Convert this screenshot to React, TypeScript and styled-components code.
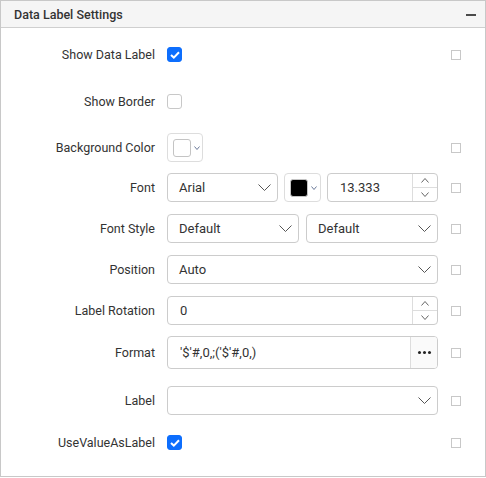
import React from "react";
import styled, { createGlobalStyle } from "styled-components";

const GlobalStyle = createGlobalStyle`
  html, body {
    margin: 0;
    padding: 0;
    background: #ffffff;
  }
  body {
    font-family: "Roboto", "Liberation Sans", sans-serif;
  }
  * {
    box-sizing: border-box;
  }
`;

function Chevron({ w = 12, h = 7, down = true, color = "#555" }: { w?: number; h?: number; down?: boolean; color?: string }) {
  return (
    <svg width={w} height={h} viewBox={`0 0 ${w} ${h}`} fill="none">
      <polyline
        points={down ? `0.5,0.5 ${w / 2},${h - 0.5} ${w - 0.5},0.5` : `0.5,${h - 0.5} ${w / 2},0.5 ${w - 0.5},${h - 0.5}`}
        stroke={color}
        strokeWidth="1"
      />
    </svg>
  );
}

function CheckBox({ checked }: { checked?: boolean }) {
  return (
    <Check $checked={checked}>
      {checked && (
        <svg width="10" height="8" viewBox="0 0 10 8" fill="none">
          <polyline points="1,4 3.8,6.6 9,1.2" stroke="#fff" strokeWidth="2" />
        </svg>
      )}
    </Check>
  );
}

function Dropdown({ value, width }: { value?: string; width?: number }) {
  return (
    <Select $width={width}>
      <span>{value}</span>
      <Chevron w={13} h={7} />
    </Select>
  );
}

function ColorPicker({ color, width }: { color: string; width: number }) {
  return (
    <ColorBox $width={width}>
      <Swatch $color={color} />
      <Chevron w={6} h={4} color="#6b7a99" />
    </ColorBox>
  );
}

function NumericBox({ value, width }: { value: string; width?: number }) {
  return (
    <Numeric $width={width}>
      <InputText>{value}</InputText>
      <Spinner>
        <SpinHalf>
          <Chevron w={8} h={5} down={false} color="#666" />
        </SpinHalf>
        <SpinHalf>
          <Chevron w={8} h={5} color="#666" />
        </SpinHalf>
      </Spinner>
    </Numeric>
  );
}

function Row({
  label,
  mt,
  side = true,
  children,
}: {
  label: string;
  mt: number;
  side?: boolean;
  children: React.ReactNode;
}) {
  return (
    <RowWrap $mt={mt}>
      <Label>{label}</Label>
      <Controls>{children}</Controls>
      {side && <SideBox />}
    </RowWrap>
  );
}

export default function App() {
  return (
    <>
      <GlobalStyle />
      <Panel>
        <Header>
          <Title>Data Label Settings</Title>
          <Minus />
        </Header>
        <Body>
          <Row label="Show Data Label" mt={12}>
            <CheckBox checked />
          </Row>
          <Row label="Show Border" mt={18} side={false}>
            <CheckBox />
          </Row>
          <Row label="Background Color" mt={17}>
            <ColorPicker color="#ffffff" width={36} />
          </Row>
          <Row label="Font" mt={11}>
            <Dropdown value="Arial" width={111} />
            <ColorPicker color="#000000" width={37} />
            <NumericBox value="13.333" width={111} />
          </Row>
          <Row label="Font Style" mt={12}>
            <Dropdown value="Default" width={132} />
            <Dropdown value="Default" width={132} />
          </Row>
          <Row label="Position" mt={12}>
            <Dropdown value="Auto" />
          </Row>
          <Row label="Label Rotation" mt={12}>
            <NumericBox value="0" />
          </Row>
          <Row label="Format" mt={11}>
            <FormatBox>
              <InputText>'$'#,0,;('$'#,0,)</InputText>
              <DotsButton>
                <Dot />
                <Dot />
                <Dot />
              </DotsButton>
            </FormatBox>
          </Row>
          <Row label="Label" mt={17}>
            <Dropdown value="" />
          </Row>
          <Row label="UseValueAsLabel" mt={13}>
            <CheckBox checked />
          </Row>
        </Body>
      </Panel>
    </>
  );
}

const Panel = styled.div`
  width: 486px;
  height: 477px;
  border: 1px solid #c8c8c8;
  background: #ffffff;
  display: flex;
  flex-direction: column;
`;

const Header = styled.div`
  height: 27px;
  background: #f5f5f5;
  border-bottom: 1px solid #cfcfcf;
  display: flex;
  align-items: center;
  justify-content: space-between;
  padding: 0 9px 0 13px;
`;

const Title = styled.div`
  font-size: 12.5px;
  font-weight: 500;
  color: #333333;
`;

const Minus = styled.div`
  width: 10px;
  height: 2px;
  background: #4a4a4a;
  margin-top: 1px;
`;

const Body = styled.div`
  display: flex;
  flex-direction: column;
`;

const RowWrap = styled.div<{ $mt: number }>`
  display: flex;
  align-items: center;
  min-height: 29px;
  margin-top: ${(p) => p.$mt}px;
`;

const Label = styled.div`
  width: 154px;
  text-align: right;
  font-size: 12.5px;
  color: #333333;
  margin-right: 12px;
`;

const Controls = styled.div`
  width: 271px;
  display: flex;
  align-items: center;
  justify-content: space-between;
`;

const SideBox = styled.div`
  width: 10px;
  height: 10px;
  border: 1px solid #c8c8c8;
  margin-left: 13px;
`;

const Check = styled.div<{ $checked?: boolean }>`
  width: 15px;
  height: 15px;
  border-radius: 3px;
  border: 1px solid ${(p) => (p.$checked ? "#0d6efd" : "#c8c8c8")};
  background: ${(p) => (p.$checked ? "#0d6efd" : "#ffffff")};
  display: flex;
  align-items: center;
  justify-content: center;
`;

const Select = styled.div<{ $width?: number }>`
  width: ${(p) => (p.$width ? `${p.$width}px` : "100%")};
  height: 29px;
  border: 1px solid #cccccc;
  border-radius: 4px;
  display: flex;
  align-items: center;
  justify-content: space-between;
  padding: 0 6px 0 11px;
  font-size: 13px;
  color: #333333;
`;

const ColorBox = styled.div<{ $width: number }>`
  width: ${(p) => p.$width}px;
  height: 29px;
  border: 1px solid #dddddd;
  border-radius: 4px;
  display: flex;
  align-items: center;
  padding: 0 0 0 5px;
  gap: 3px;
`;

const Swatch = styled.div<{ $color: string }>`
  width: 18px;
  height: 18px;
  border-radius: 3px;
  border: 1px solid #c4c4c4;
  background: ${(p) => p.$color};
`;

const Numeric = styled.div<{ $width?: number }>`
  width: ${(p) => (p.$width ? `${p.$width}px` : "100%")};
  height: 29px;
  border: 1px solid #cccccc;
  border-radius: 4px;
  display: flex;
  overflow: hidden;
`;

const InputText = styled.div`
  flex: 1;
  display: flex;
  align-items: center;
  padding-left: 12px;
  font-size: 13px;
  color: #333333;
  white-space: nowrap;
`;

const Spinner = styled.div`
  width: 25px;
  border-left: 1px solid #dddddd;
  display: flex;
  flex-direction: column;
`;

const SpinHalf = styled.div`
  flex: 1;
  display: flex;
  align-items: center;
  justify-content: center;
  & + & {
    border-top: 1px solid #dddddd;
  }
`;

const FormatBox = styled.div`
  width: 100%;
  height: 33px;
  border: 1px solid #cccccc;
  border-radius: 4px;
  display: flex;
  overflow: hidden;
`;

const DotsButton = styled.div`
  width: 27px;
  border-left: 1px solid #dddddd;
  background: #fafafa;
  display: flex;
  align-items: center;
  justify-content: center;
  gap: 2px;
`;

const Dot = styled.span`
  width: 3px;
  height: 3px;
  border-radius: 50%;
  background: #222222;
`;
